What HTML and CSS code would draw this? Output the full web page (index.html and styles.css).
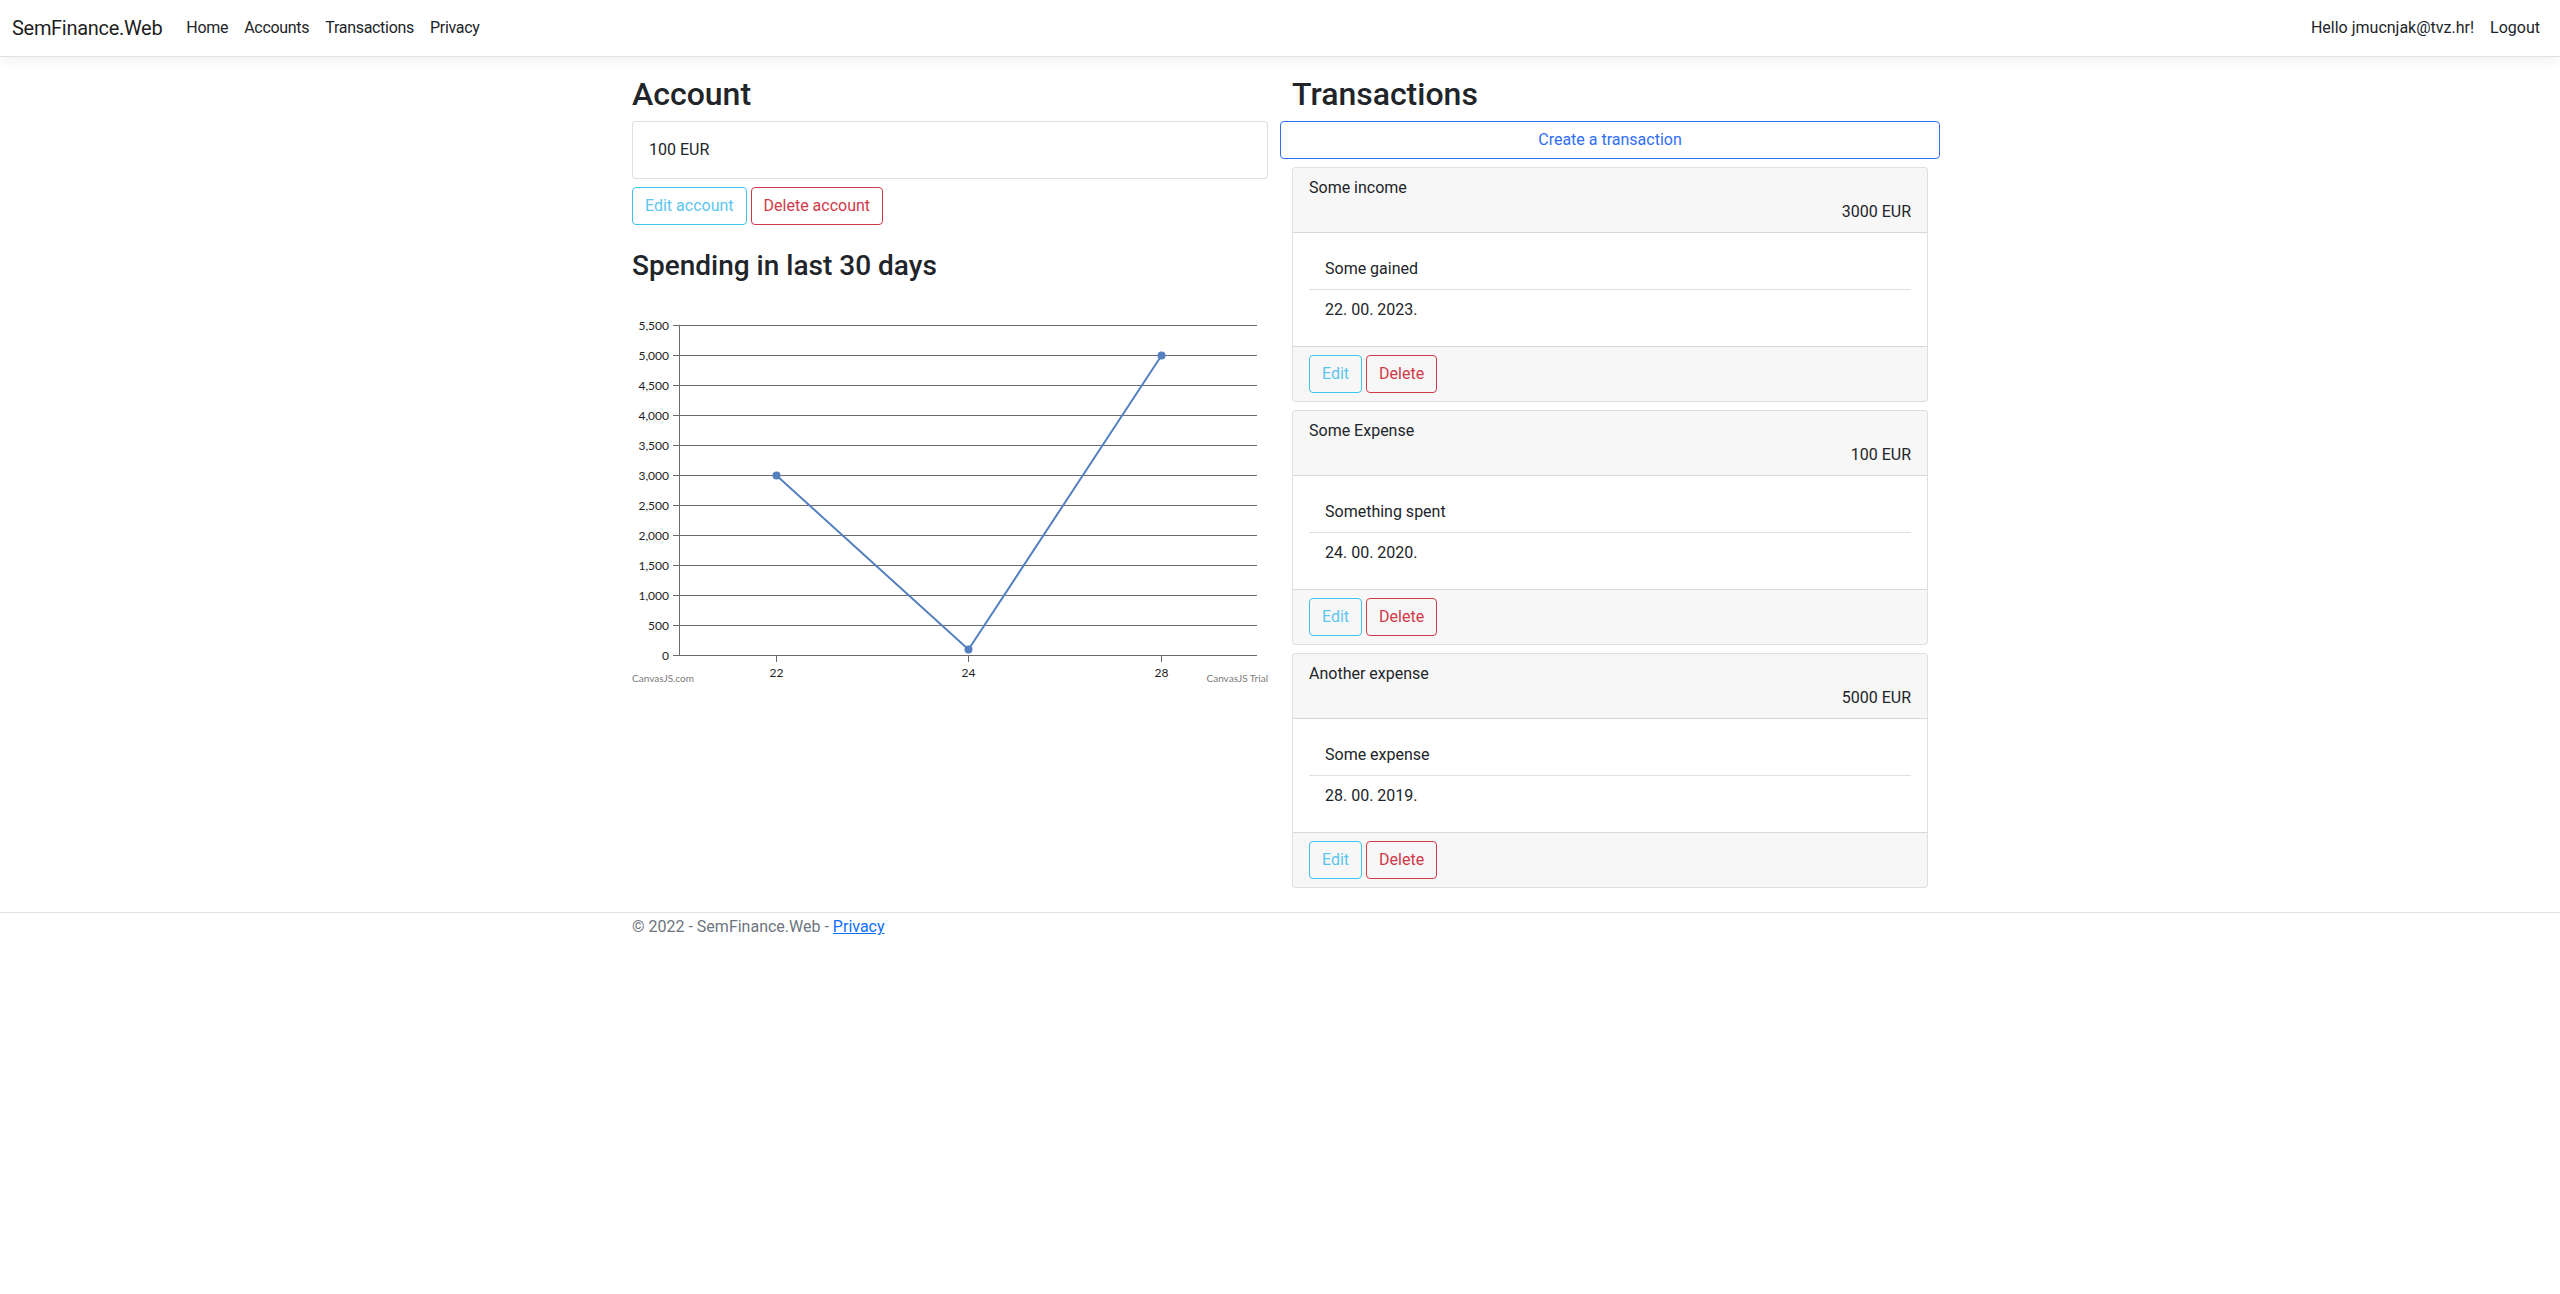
FILE: index.html
```html
<!DOCTYPE html>
<html lang="en">
<head>
<meta charset="utf-8">
<title>Account - SemFinance.Web</title>
<link rel="stylesheet" href="styles.css">
</head>
<body>
<header>
  <nav class="navbar">
    <div class="nav-inner">
      <a class="brand" href="#">SemFinance.Web</a>
      <ul class="nav-list nav-main">
        <li><a class="nav-link" href="#">Home</a></li>
        <li><a class="nav-link" href="#">Accounts</a></li>
        <li><a class="nav-link" href="#">Transactions</a></li>
        <li><a class="nav-link" href="#">Privacy</a></li>
      </ul>
      <ul class="nav-list">
        <li><a class="nav-link" href="#">Hello jmucnjak@tvz.hr!</a></li>
        <li><a class="nav-link" href="#">Logout</a></li>
      </ul>
    </div>
  </nav>
</header>

<div class="container">
  <main class="main">
    <div class="row">
      <section class="col">
        <h2>Account</h2>
        <div class="card">
          <div class="card-body">100 EUR</div>
        </div>
        <div class="btn-group">
          <a class="btn btn-outline-info" href="#">Edit account</a>
          <a class="btn btn-outline-danger" href="#">Delete account</a>
        </div>
        <h3>Spending in last 30 days</h3>
        <div class="chart">
          <svg class="chart-svg" width="636" height="400" viewBox="0 0 636 400" xmlns="http://www.w3.org/2000/svg">
            <g class="grid">
              <line x1="47" y1="34.5" x2="625" y2="34.5"/>
              <line x1="47" y1="64.5" x2="625" y2="64.5"/>
              <line x1="47" y1="94.5" x2="625" y2="94.5"/>
              <line x1="47" y1="124.5" x2="625" y2="124.5"/>
              <line x1="47" y1="154.5" x2="625" y2="154.5"/>
              <line x1="47" y1="184.5" x2="625" y2="184.5"/>
              <line x1="47" y1="214.5" x2="625" y2="214.5"/>
              <line x1="47" y1="244.5" x2="625" y2="244.5"/>
              <line x1="47" y1="274.5" x2="625" y2="274.5"/>
              <line x1="47" y1="304.5" x2="625" y2="304.5"/>
              <line x1="47" y1="334.5" x2="625" y2="334.5"/>
            </g>
            <g class="axis">
              <line x1="47.5" y1="34" x2="47.5" y2="365"/>
              <line x1="47" y1="364.5" x2="625" y2="364.5"/>
              <line x1="41" y1="34.5" x2="47" y2="34.5"/>
              <line x1="41" y1="64.5" x2="47" y2="64.5"/>
              <line x1="41" y1="94.5" x2="47" y2="94.5"/>
              <line x1="41" y1="124.5" x2="47" y2="124.5"/>
              <line x1="41" y1="154.5" x2="47" y2="154.5"/>
              <line x1="41" y1="184.5" x2="47" y2="184.5"/>
              <line x1="41" y1="214.5" x2="47" y2="214.5"/>
              <line x1="41" y1="244.5" x2="47" y2="244.5"/>
              <line x1="41" y1="274.5" x2="47" y2="274.5"/>
              <line x1="41" y1="304.5" x2="47" y2="304.5"/>
              <line x1="41" y1="334.5" x2="47" y2="334.5"/>
              <line x1="41" y1="364.5" x2="47" y2="364.5"/>
              <line x1="144.5" y1="365" x2="144.5" y2="371"/>
              <line x1="336.5" y1="365" x2="336.5" y2="371"/>
              <line x1="529.5" y1="365" x2="529.5" y2="371"/>
            </g>
            <g class="ylabels">
              <text x="37" y="38.5">5,500</text>
              <text x="37" y="68.5">5,000</text>
              <text x="37" y="98.5">4,500</text>
              <text x="37" y="128.5">4,000</text>
              <text x="37" y="158.5">3,500</text>
              <text x="37" y="188.5">3,000</text>
              <text x="37" y="218.5">2,500</text>
              <text x="37" y="248.5">2,000</text>
              <text x="37" y="278.5">1,500</text>
              <text x="37" y="308.5">1,000</text>
              <text x="37" y="338.5">500</text>
              <text x="37" y="368.5">0</text>
            </g>
            <g class="xlabels">
              <text x="144.5" y="386">22</text>
              <text x="336.5" y="386">24</text>
              <text x="529.5" y="386">28</text>
            </g>
            <polyline class="series" points="144.5,184.5 336.5,358.5 529.5,64.5"/>
            <g class="markers">
              <circle cx="144.5" cy="184.5" r="4"/>
              <circle cx="336.5" cy="358.5" r="4"/>
              <circle cx="529.5" cy="64.5" r="4"/>
            </g>
            <text class="credit" x="0" y="391">CanvasJS.com</text>
            <text class="credit credit-right" x="636" y="391">CanvasJS Trial</text>
          </svg>
        </div>
      </section>

      <section class="col">
        <h2>Transactions</h2>
        <div class="bleed">
          <a class="btn btn-outline-primary btn-block" href="#">Create a transaction</a>
        </div>

        <div class="card tx-card">
          <div class="card-header">
            <div>Some income</div>
            <div class="amount">3000 EUR</div>
          </div>
          <div class="card-body">
            <ul class="list-flush">
              <li class="list-item">Some gained</li>
              <li class="list-item">22. 00. 2023.</li>
            </ul>
          </div>
          <div class="card-footer">
            <a class="btn btn-outline-info" href="#">Edit</a>
            <a class="btn btn-outline-danger" href="#">Delete</a>
          </div>
        </div>

        <div class="card tx-card">
          <div class="card-header">
            <div>Some Expense</div>
            <div class="amount">100 EUR</div>
          </div>
          <div class="card-body">
            <ul class="list-flush">
              <li class="list-item">Something spent</li>
              <li class="list-item">24. 00. 2020.</li>
            </ul>
          </div>
          <div class="card-footer">
            <a class="btn btn-outline-info" href="#">Edit</a>
            <a class="btn btn-outline-danger" href="#">Delete</a>
          </div>
        </div>

        <div class="card tx-card">
          <div class="card-header">
            <div>Another expense</div>
            <div class="amount">5000 EUR</div>
          </div>
          <div class="card-body">
            <ul class="list-flush">
              <li class="list-item">Some expense</li>
              <li class="list-item">28. 00. 2019.</li>
            </ul>
          </div>
          <div class="card-footer">
            <a class="btn btn-outline-info" href="#">Edit</a>
            <a class="btn btn-outline-danger" href="#">Delete</a>
          </div>
        </div>
      </section>
    </div>
  </main>
</div>

<footer class="footer">
  <div class="container">&copy; 2022 - SemFinance.Web - <a class="footer-link" href="#">Privacy</a></div>
</footer>
</body>
</html>
```

FILE: styles.css
```css
* {
  box-sizing: border-box;
}

html,
body {
  margin: 0;
  padding: 0;
}

body {
  font-family: Roboto, "Noto Sans", "Liberation Sans", sans-serif;
  font-size: 16px;
  line-height: 1.5;
  color: #212529;
  background: #fff;
}

a {
  text-decoration: none;
}

/* ---------- navbar ---------- */
.navbar {
  background: #fff;
  border-bottom: 1px solid #dee2e6;
  box-shadow: 0 4px 12px rgba(0, 0, 0, 0.05);
  padding: 8px 0;
  margin-bottom: 17px;
}

.nav-inner {
  display: flex;
  align-items: center;
  padding: 0 12px;
}

.brand {
  font-size: 20px;
  line-height: 30px;
  padding: 5px 0;
  margin-right: 16px;
  letter-spacing: -0.3px;
  color: rgba(0, 0, 0, 0.9);
}

.nav-list {
  display: flex;
  list-style: none;
  margin: 0;
  padding: 0;
}

.nav-main {
  flex: 1;
}

.nav-main .nav-link {
  letter-spacing: -0.3px;
}

.nav-link {
  display: block;
  padding: 8px;
  color: #212529;
}

/* ---------- layout ---------- */
.container {
  width: 1320px;
  margin: 0 auto;
  padding: 0 12px;
}

.main {
  padding-bottom: 16px;
}

.row {
  display: flex;
  margin: 0 -12px;
}

.col {
  flex: 1 0 0;
  min-width: 0;
  padding: 0 12px;
}

.bleed {
  margin: 0 -12px;
}

h2 {
  font-size: 32px;
  font-weight: 500;
  line-height: 1.2;
  margin: 0;
  padding-top: 1px;
  margin-bottom: 8px;
}

h3 {
  font-size: 28px;
  font-weight: 500;
  line-height: 1.2;
  margin: 24px 0 8px;
}

/* ---------- cards ---------- */
.card {
  border: 1px solid rgba(0, 0, 0, 0.125);
  border-radius: 4px;
  background: #fff;
  overflow: hidden;
}

.card-body {
  padding: 16px;
}

.tx-card {
  margin: 8px 0;
}

.card-header {
  padding: 8px 16px;
  background: rgba(0, 0, 0, 0.03);
  border-bottom: 1px solid rgba(0, 0, 0, 0.125);
}

.amount {
  text-align: right;
}

.card-footer {
  display: flex;
  gap: 4px;
  padding: 8px 16px;
  background: rgba(0, 0, 0, 0.03);
  border-top: 1px solid rgba(0, 0, 0, 0.125);
}

.list-flush {
  list-style: none;
  margin: 0;
  padding: 0;
}

.list-item {
  padding: 8px 16px;
  border-bottom: 1px solid rgba(0, 0, 0, 0.125);
}

.list-item:last-child {
  border-bottom: 0;
}

/* ---------- buttons ---------- */
.btn-group {
  display: flex;
  gap: 4px;
  margin-top: 8px;
}

.btn {
  display: inline-block;
  padding: 6px 12px;
  font-size: 16px;
  line-height: 24px;
  border: 1px solid transparent;
  border-radius: 4px;
  text-align: center;
  background: transparent;
}

.btn-block {
  display: block;
  width: 100%;
}

.btn-outline-primary {
  color: #2f6ef5;
  border-color: #2f6ef5;
}

.btn-outline-info {
  color: #5cc6ee;
  border-color: #3cc4f0;
}

.btn-outline-danger {
  color: #d03a48;
  border-color: #d03a48;
}

/* ---------- chart ---------- */
.chart {
  height: 400px;
}

.chart-svg {
  display: block;
}

.grid line,
.axis line {
  stroke: #6b6b6b;
  stroke-width: 1;
  shape-rendering: crispEdges;
}

.ylabels text,
.xlabels text {
  font-family: Lato, "Liberation Sans", sans-serif;
  font-size: 12px;
  fill: #1e1e1e;
}

.ylabels text {
  text-anchor: end;
}

.xlabels text {
  text-anchor: middle;
}

.series {
  fill: none;
  stroke: #5580bf;
  stroke-width: 2;
}

.markers circle {
  fill: #5580bf;
}

.credit {
  font-family: Lato, "Liberation Sans", sans-serif;
  font-size: 10px;
  fill: #7a7a7a;
}

.credit-right {
  text-anchor: end;
}

/* ---------- footer ---------- */
.footer {
  border-top: 1px solid #dee2e6;
  color: #6c757d;
  line-height: 28px;
  white-space: nowrap;
}

.footer-link {
  color: #0d6efd;
  text-decoration: underline;
}
```
